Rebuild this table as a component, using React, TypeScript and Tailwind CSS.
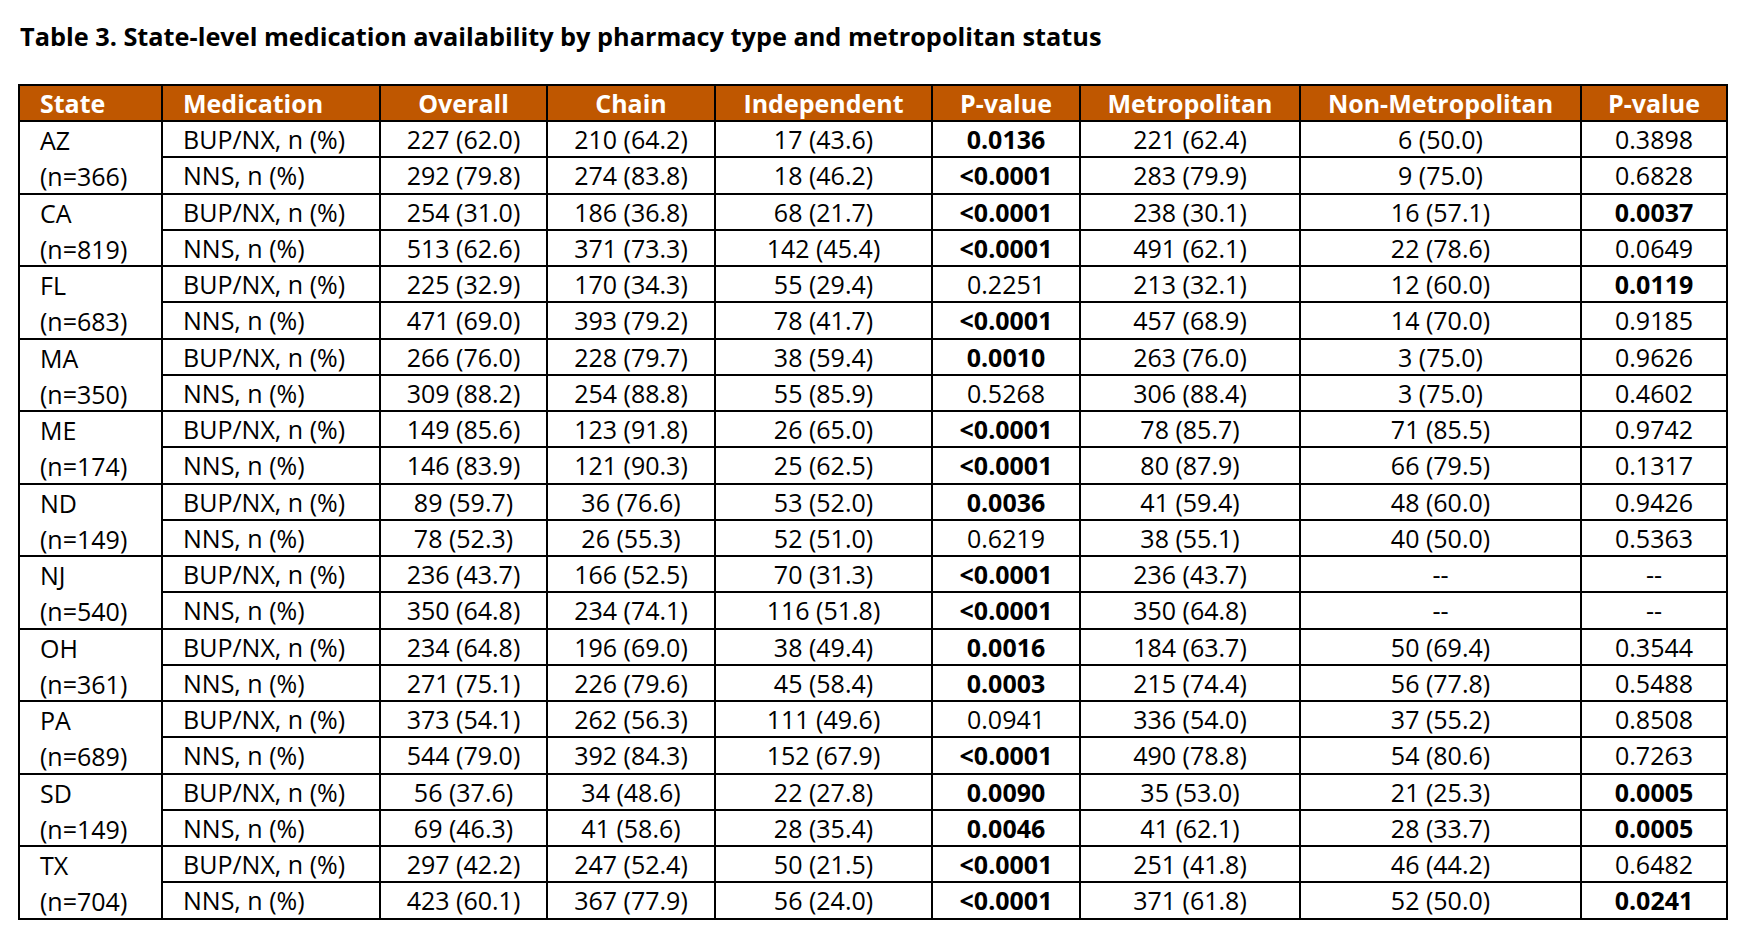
const HEADERS = [
  "State",
  "Medication",
  "Overall",
  "Chain",
  "Independent",
  "P-value",
  "Metropolitan",
  "Non-Metropolitan",
  "P-value",
];

// values prefixed with * are bold (significant)
const STATES: { state: string; n: string; bup: string[]; nns: string[] }[] = [
  {
    state: "AZ",
    n: "(n=366)",
    bup: ["227 (62.0)", "210 (64.2)", "17 (43.6)", "*0.0136", "221 (62.4)", "6 (50.0)", "0.3898"],
    nns: ["292 (79.8)", "274 (83.8)", "18 (46.2)", "*<0.0001", "283 (79.9)", "9 (75.0)", "0.6828"],
  },
  {
    state: "CA",
    n: "(n=819)",
    bup: ["254 (31.0)", "186 (36.8)", "68 (21.7)", "*<0.0001", "238 (30.1)", "16 (57.1)", "*0.0037"],
    nns: ["513 (62.6)", "371 (73.3)", "142 (45.4)", "*<0.0001", "491 (62.1)", "22 (78.6)", "0.0649"],
  },
  {
    state: "FL",
    n: "(n=683)",
    bup: ["225 (32.9)", "170 (34.3)", "55 (29.4)", "0.2251", "213 (32.1)", "12 (60.0)", "*0.0119"],
    nns: ["471 (69.0)", "393 (79.2)", "78 (41.7)", "*<0.0001", "457 (68.9)", "14 (70.0)", "0.9185"],
  },
  {
    state: "MA",
    n: "(n=350)",
    bup: ["266 (76.0)", "228 (79.7)", "38 (59.4)", "*0.0010", "263 (76.0)", "3 (75.0)", "0.9626"],
    nns: ["309 (88.2)", "254 (88.8)", "55 (85.9)", "0.5268", "306 (88.4)", "3 (75.0)", "0.4602"],
  },
  {
    state: "ME",
    n: "(n=174)",
    bup: ["149 (85.6)", "123 (91.8)", "26 (65.0)", "*<0.0001", "78 (85.7)", "71 (85.5)", "0.9742"],
    nns: ["146 (83.9)", "121 (90.3)", "25 (62.5)", "*<0.0001", "80 (87.9)", "66 (79.5)", "0.1317"],
  },
  {
    state: "ND",
    n: "(n=149)",
    bup: ["89 (59.7)", "36 (76.6)", "53 (52.0)", "*0.0036", "41 (59.4)", "48 (60.0)", "0.9426"],
    nns: ["78 (52.3)", "26 (55.3)", "52 (51.0)", "0.6219", "38 (55.1)", "40 (50.0)", "0.5363"],
  },
  {
    state: "NJ",
    n: "(n=540)",
    bup: ["236 (43.7)", "166 (52.5)", "70 (31.3)", "*<0.0001", "236 (43.7)", "--", "--"],
    nns: ["350 (64.8)", "234 (74.1)", "116 (51.8)", "*<0.0001", "350 (64.8)", "--", "--"],
  },
  {
    state: "OH",
    n: "(n=361)",
    bup: ["234 (64.8)", "196 (69.0)", "38 (49.4)", "*0.0016", "184 (63.7)", "50 (69.4)", "0.3544"],
    nns: ["271 (75.1)", "226 (79.6)", "45 (58.4)", "*0.0003", "215 (74.4)", "56 (77.8)", "0.5488"],
  },
  {
    state: "PA",
    n: "(n=689)",
    bup: ["373 (54.1)", "262 (56.3)", "111 (49.6)", "0.0941", "336 (54.0)", "37 (55.2)", "0.8508"],
    nns: ["544 (79.0)", "392 (84.3)", "152 (67.9)", "*<0.0001", "490 (78.8)", "54 (80.6)", "0.7263"],
  },
  {
    state: "SD",
    n: "(n=149)",
    bup: ["56 (37.6)", "34 (48.6)", "22 (27.8)", "*0.0090", "35 (53.0)", "21 (25.3)", "*0.0005"],
    nns: ["69 (46.3)", "41 (58.6)", "28 (35.4)", "*0.0046", "41 (62.1)", "28 (33.7)", "*0.0005"],
  },
  {
    state: "TX",
    n: "(n=704)",
    bup: ["297 (42.2)", "247 (52.4)", "50 (21.5)", "*<0.0001", "251 (41.8)", "46 (44.2)", "0.6482"],
    nns: ["423 (60.1)", "367 (77.9)", "56 (24.0)", "*<0.0001", "371 (61.8)", "52 (50.0)", "*0.0241"],
  },
];

function ValueCell({ value }: { value: string }) {
  const bold = value.startsWith("*");
  return (
    <div
      className={`flex items-center justify-center border-r-2 border-b-2 border-black ${
        bold ? "font-bold" : ""
      }`}
    >
      {bold ? value.slice(1) : value}
    </div>
  );
}

function MedRow({ label, values }: { label: string; values: string[] }) {
  return (
    <>
      <div className="flex items-center border-r-2 border-b-2 border-black pl-5">{label}</div>
      {values.map((v, i) => (
        <ValueCell key={i} value={v} />
      ))}
    </>
  );
}

export default function App() {
  return (
    <div
      className="min-h-screen bg-white text-black"
      style={{ fontFamily: '"Open Sans", "Noto Sans", sans-serif' }}
    >
      <h1 className="pl-[20px] pt-[21px] text-[25.3px] font-bold leading-[30px]">
        Table 3. State-level medication availability by pharmacy type and metropolitan status
      </h1>

      <div className="ml-[18px] mt-[33px] grid w-[1710px] grid-cols-[143px_218px_167px_168px_217px_148px_220px_281px_146px] grid-rows-[36px] auto-rows-[36.25px] border-t-2 border-l-2 border-black text-[25px] leading-[36px]">
        {HEADERS.map((h, i) => (
          <div
            key={i}
            className={`flex items-center border-r-2 border-b-2 border-black bg-[#bf5700] font-bold text-white ${
              i < 2 ? "pl-5" : "justify-center"
            }`}
          >
            {h}
          </div>
        ))}

        {STATES.map((s) => (
          <div key={s.state} className="contents">
            <div className="row-span-2 flex flex-col justify-around border-r-2 border-b-2 border-black pl-5">
              <span>{s.state}</span>
              <span>{s.n}</span>
            </div>
            <MedRow label="BUP/NX, n (%)" values={s.bup} />
            <MedRow label="NNS, n (%)" values={s.nns} />
          </div>
        ))}
      </div>
    </div>
  );
}
